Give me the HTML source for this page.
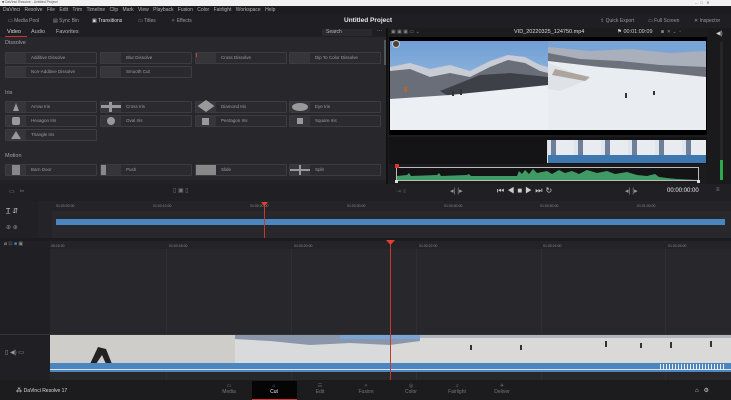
<!DOCTYPE html>
<html><head><meta charset="utf-8"><style>
*{margin:0;padding:0;box-sizing:border-box}
body{width:731px;height:400px;overflow:hidden;background:#28282c;font-family:"Liberation Sans",sans-serif;color:#b8b8bc;position:relative}
.a{position:absolute}
.t{font-size:5px;white-space:nowrap}
.item{position:absolute;width:92px;height:12px;background:#2b2b2f;border:1px solid #3c3c41;border-radius:1px}
.item .ic{position:absolute;left:0;top:0;width:20px;height:10px;background:#35353a}
.item .lb{position:absolute;left:25px;top:2px;font-size:4.5px;color:#9a9aa0}
.sec{position:absolute;left:5px;font-size:5.5px;color:#a0a0a6}
.rl{position:absolute;font-size:3.5px;color:#888;top:3px}
.tick{position:absolute;width:1px;background:#55555a}
</style></head><body>
<div class="a" style="left:0;top:0;width:731px;height:6px;background:#f2f2f2"></div>
<div class="a t" style="left:2px;top:0;font-size:3.5px;color:#555">■ DaVinci Resolve - Untitled Project</div>
<div class="a t" style="left:695px;top:0;font-size:4px;color:#555">–&nbsp;&nbsp;&nbsp;□&nbsp;&nbsp;&nbsp;✕</div>
<div class="a" style="left:0;top:6px;width:731px;height:8px;background:#1d1d20"></div>
<div class="a t" style="left:3px;top:7px;font-size:5px;color:#b0b0b4;word-spacing:3px">DaVinci&nbsp;Resolve File Edit Trim Timeline Clip Mark View Playback Fusion Color Fairlight Workspace Help</div>
<div class="a" style="left:0;top:14px;width:731px;height:14px;background:#1f1f23"></div>
<div class="a t" style="left:8px;top:18px;color:#999">▭ Media Pool</div>
<div class="a t" style="left:53px;top:18px;color:#999">▤ Sync Bin</div>
<div class="a t" style="left:92px;top:18px;color:#ddd">▣ Transitions</div>
<div class="a t" style="left:138px;top:18px;color:#999">▭ Titles</div>
<div class="a t" style="left:171px;top:18px;color:#999">✧ Effects</div>
<div class="a t" style="left:344px;top:17px;font-size:6.5px;color:#e8e8ea;font-weight:bold">Untitled Project</div>
<div class="a t" style="left:600px;top:18px;color:#999">⇪ Quick Export</div>
<div class="a t" style="left:648px;top:18px;color:#999">▭ Full Screen</div>
<div class="a t" style="left:694px;top:18px;color:#999">✕ Inspector</div>
<div class="a" style="left:0;top:28px;width:386px;height:9px;background:#1f1f23"></div>
<div class="a t" style="left:7px;top:29px;color:#ddd;font-size:5.5px">Video</div>
<div class="a" style="left:5px;top:36px;width:22px;height:1px;background:#c33"></div>
<div class="a t" style="left:31px;top:29px;font-size:5.5px">Audio</div>
<div class="a t" style="left:56px;top:29px;font-size:5.5px">Favorites</div>
<div class="a" style="left:322px;top:29px;width:50px;height:7px;background:#2a2a2e"></div>
<div class="a t" style="left:326px;top:29px;font-size:5px">Search</div>
<div class="a t" style="left:377px;top:28px;font-size:5px">···</div>
<div class="a" style="left:384px;top:40px;width:2px;height:25px;background:#55555a"></div>

<div class="sec" style="top:40px">Dissolve</div>
<div class="item" style="left:5px;top:52px"><div class="ic"></div><div class="lb">Additive Dissolve</div></div>
<div class="item" style="left:100px;top:52px"><div class="ic"></div><div class="lb">Blur Dissolve</div></div>
<div class="item" style="left:195px;top:52px"><div class="ic"></div><div class="a" style="left:0;top:0;width:1px;height:4px;background:#d33"></div><div class="lb">Cross Dissolve</div></div>
<div class="item" style="left:289px;top:52px"><div class="ic"></div><div class="lb">Dip To Color Dissolve</div></div>
<div class="item" style="left:5px;top:66px"><div class="ic"></div><div class="lb">Non-Additive Dissolve</div></div>
<div class="item" style="left:100px;top:66px"><div class="ic"></div><div class="lb">Smooth Cut</div></div>

<div class="sec" style="top:90px">Iris</div>
<div class="item" style="left:5px;top:101px"><div class="ic"><div class="a" style="left:7px;top:1px;width:0;height:0;border-left:3px solid transparent;border-right:3px solid transparent;border-bottom:8px solid #999"></div></div><div class="lb">Arrow Iris</div></div>
<div class="item" style="left:100px;top:101px"><div class="ic"><div class="a" style="left:0;top:3px;width:20px;height:3px;background:#999"></div><div class="a" style="left:8px;top:0;width:3px;height:10px;background:#999"></div></div><div class="lb">Cross Iris</div></div>
<div class="item" style="left:195px;top:101px"><div class="ic"><div class="a" style="left:4px;top:-2px;width:12px;height:12px;background:#999;transform:scaleY(.7) rotate(45deg)"></div></div><div class="lb">Diamond Iris</div></div>
<div class="item" style="left:289px;top:101px"><div class="ic"><div class="a" style="left:2px;top:1px;width:16px;height:8px;border-radius:50%;background:#999"></div></div><div class="lb">Eye Iris</div></div>
<div class="item" style="left:5px;top:115px"><div class="ic"><div class="a" style="left:6px;top:1px;width:8px;height:8px;border-radius:2px;background:#999"></div></div><div class="lb">Hexagon Iris</div></div>
<div class="item" style="left:100px;top:115px"><div class="ic"><div class="a" style="left:6px;top:1px;width:8px;height:8px;border-radius:50%;background:#999"></div></div><div class="lb">Oval Iris</div></div>
<div class="item" style="left:195px;top:115px"><div class="ic"><div class="a" style="left:6px;top:2px;width:7px;height:7px;background:#999"></div></div><div class="lb">Pentagon Iris</div></div>
<div class="item" style="left:289px;top:115px"><div class="ic"><div class="a" style="left:7px;top:2px;width:6px;height:6px;background:#999"></div></div><div class="lb">Square Iris</div></div>
<div class="item" style="left:5px;top:129px"><div class="ic"><div class="a" style="left:5px;top:1px;width:0;height:0;border-left:5px solid transparent;border-right:5px solid transparent;border-bottom:8px solid #999"></div></div><div class="lb">Triangle Iris</div></div>

<div class="sec" style="top:153px">Motion</div>
<div class="item" style="left:5px;top:164px"><div class="ic"><div class="a" style="left:6px;top:0;width:8px;height:10px;background:#888"></div></div><div class="lb">Barn Door</div></div>
<div class="item" style="left:100px;top:164px"><div class="ic"><div class="a" style="left:0;top:0;width:5px;height:10px;background:#888"></div></div><div class="lb">Push</div></div>
<div class="item" style="left:195px;top:164px"><div class="ic" style="background:#888"></div><div class="lb">Slide</div></div>
<div class="item" style="left:289px;top:164px"><div class="ic"><div class="a" style="left:0;top:4px;width:20px;height:2px;background:#999"></div><div class="a" style="left:9px;top:0;width:2px;height:10px;background:#999"></div></div><div class="lb">Split</div></div>
<div class="a" style="left:0;top:180px;width:386px;height:4px;background:#222226"></div>

<!-- viewer -->
<div class="a" style="left:386px;top:28px;width:345px;height:156px;background:#1c1c1f"></div>
<div class="a" style="left:386px;top:28px;width:2px;height:156px;background:#111"></div>
<div class="a t" style="left:391px;top:29px;color:#888">▣ ▣ ▣ ▭ ⌄</div>
<div class="a t" style="left:514px;top:29px;color:#ddd;font-size:5.5px">VID_20220325_124750.mp4</div>
<div class="a t" style="left:617px;top:29px;color:#ccc;font-size:5.5px">⚑ 00:01:09:09</div>
<div class="a t" style="left:661px;top:29px;color:#888">◙ &nbsp;✕ ⌄ &nbsp;▫</div>
<div class="a" style="left:389px;top:37px;width:318px;height:98px;background:#000"></div>
<svg class="a" style="left:390px;top:41px" width="316" height="89" viewBox="0 0 316 89">
<defs><linearGradient id="sk" x1="0" y1="0" x2="0" y2="1"><stop offset="0" stop-color="#6f9ed4"/><stop offset="1" stop-color="#b8d0ea"/></linearGradient></defs>
<rect width="158" height="89" fill="url(#sk)"/>
<path d="M0 26 L20 22 L40 28 L60 24 L80 30 L100 20 L118 14 L135 16 L150 24 L158 26 L158 60 L0 60Z" fill="#c8ccd4"/>
<path d="M0 30 L20 28 L40 36 L60 32 L80 36 L100 26 L118 19 L135 22 L150 30 L158 32 L158 50 L40 58 L0 60Z" fill="#6a6e78"/>
<path d="M50 50 L90 34 L120 32 L158 36 L158 48 L60 56Z" fill="#3e4048"/>
<path d="M0 58 L60 54 L158 44 L158 89 L0 89Z" fill="#eceff3"/>
<rect x="158" width="158" height="89" fill="#7aa4d6"/>
<path d="M158 6 L200 10 L240 8 L280 12 L316 10 L316 36 L158 36Z" fill="#a9b0bc"/>
<path d="M158 12 L190 18 L230 20 L270 24 L316 26 L316 40 L158 30Z" fill="#6c717c"/>
<path d="M158 20 L210 26 L260 30 L316 36 L316 89 L158 89Z" fill="#e9ecf0"/>
<path d="M158 22 L200 38 L170 50 L158 48Z" fill="#dfe2e6"/>
<path d="M165 28 L200 36 L195 40 L162 34Z" fill="#8a7c6e" opacity=".6"/>
<rect x="235" y="52" width="2" height="5" fill="#333"/><rect x="263" y="50" width="2" height="4" fill="#333"/>
<rect x="62" y="50" width="2" height="5" fill="#333"/><rect x="70" y="48" width="2" height="6" fill="#333"/><rect x="14" y="46" width="3" height="5" fill="#a63"/>
</svg>
<div class="a" style="left:392px;top:40px;width:8px;height:8px;border-radius:50%;border:1px solid #ccc;background:#444"></div>
<div class="a" style="left:389px;top:137px;width:318px;height:27px;background:#141417"></div>
<div class="a" style="left:547px;top:140px;width:159px;height:15px;background:repeating-linear-gradient(90deg,#dfe5ec 0 4px,#6f7f9a 4px 9px,#e8ecf0 9px 27px)"></div>
<div class="a" style="left:547px;top:155px;width:159px;height:8px;background:#3e78b0"></div>
<div class="a" style="left:547px;top:140px;width:1px;height:23px;background:#ddd"></div>
<div class="a" style="left:396px;top:167px;width:303px;height:14px;border:1px solid #bbb;background:#141417"></div>
<svg class="a" style="left:397px;top:168px" width="301" height="12" viewBox="0 0 301 12">
<path d="M0 12 L0 8 L10 7 L12 5 L14 8 L40 7 L42 5 L44 8 L70 7 L72 6 L74 8 L120 8 L122 3 L125 6 L128 2 L132 6 L136 1 L140 5 L150 3 L155 6 L162 2 L168 5 L175 3 L182 6 L190 2 L200 5 L210 3 L218 6 L230 4 L240 7 L250 8 L258 6 L262 9 L270 10 L280 11 L301 12Z" fill="#3f9a64"/>
</svg>
<div class="a" style="left:395px;top:164px;width:4px;height:4px;background:#d33"></div>
<div class="a" style="left:395px;top:180px;width:3px;height:3px;background:#ddd"></div>
<div class="a" style="left:697px;top:180px;width:3px;height:3px;background:#ddd"></div>
<div class="a" style="left:707px;top:28px;width:24px;height:156px;background:#1a1a1d"></div>
<div class="a t" style="left:716px;top:30px;color:#ccc;font-size:6px">◀)</div>
<div class="a" style="left:720px;top:42px;width:3px;height:118px;background:#26262a"></div>
<div class="a" style="left:720px;top:160px;width:3px;height:20px;background:#2ea84a"></div>

<div class="a" style="left:0;top:184px;width:731px;height:17px;background:#202024"></div>
<div class="a t" style="left:9px;top:188px;color:#777;font-size:6px">▭&nbsp;&nbsp;&nbsp;✂</div>
<div class="a t" style="left:173px;top:187px;color:#777;font-size:6px">▯ ▣ ▯</div>
<div class="a t" style="left:396px;top:188px;color:#555;font-size:6px">⇥ ≡</div>
<div class="a t" style="left:450px;top:187px;color:#999;font-size:7px">◂| |▸</div>
<div class="a t" style="left:497px;top:186px;color:#ccc;font-size:8px;letter-spacing:3px">⏮◀■▶⏭↻</div>
<div class="a t" style="left:625px;top:187px;color:#999;font-size:7px">◂| |▸</div>
<div class="a t" style="left:667px;top:188px;color:#eee;font-size:6px">00:00:00:00</div>
<div class="a t" style="left:716px;top:187px;color:#888;font-size:6px">≡</div>

<div class="a" style="left:0;top:201px;width:731px;height:37px;background:#28282c"></div>
<div class="a" style="left:0;top:201px;width:38px;height:37px;background:#212125"></div>
<div class="a" style="left:38px;top:201px;width:14px;height:37px;background:#242428"></div>
<div class="a t" style="left:6px;top:207px;color:#ccc;font-size:7px">T̲ ⇵</div>
<div class="a t" style="left:6px;top:224px;color:#888;font-size:6px">⊕ ⊕</div>
<div class="a" style="left:52px;top:201px;width:679px;height:10px;background:#242428"></div>
<div class="rl" style="left:56px;top:204px">01:00:00:00</div>
<div class="rl" style="left:153px;top:204px">01:00:10:00</div>
<div class="rl" style="left:250px;top:204px">01:00:20:00</div>
<div class="rl" style="left:347px;top:204px">01:00:30:00</div>
<div class="rl" style="left:444px;top:204px">01:00:40:00</div>
<div class="rl" style="left:540px;top:204px">01:00:50:00</div>
<div class="rl" style="left:637px;top:204px">01:01:00:00</div>
<div class="a" style="left:56px;top:219px;width:669px;height:6px;background:#4a86c0"></div>
<div class="a" style="left:264px;top:203px;width:1px;height:35px;background:#c03a30"></div>
<div class="a" style="left:261px;top:202px;width:7px;height:4px;background:#e04030;clip-path:polygon(0 0,100% 0,50% 100%)"></div>

<div class="a" style="left:0;top:238px;width:731px;height:3px;background:#1c1c20"></div>
<div class="a" style="left:0;top:241px;width:50px;height:139px;background:#202024"></div>
<div class="a" style="left:50px;top:241px;width:681px;height:8px;background:#242428"></div>
<div class="a t" style="left:4px;top:241px;color:#bbb;font-size:5px">⌀ <span style="color:#777">⊡</span> <span style="color:#3a8ae0">■</span> <span style="color:#888">▣</span></div>
<div class="rl" style="left:51px;top:244px">00:16:00</div>
<div class="rl" style="left:169px;top:244px">01:00:18:00</div>
<div class="rl" style="left:294px;top:244px">01:00:20:00</div>
<div class="rl" style="left:419px;top:244px">01:00:22:00</div>
<div class="rl" style="left:543px;top:244px">01:00:24:00</div>
<div class="rl" style="left:668px;top:244px">01:00:26:00</div>
<div class="tick" style="left:166px;top:249px;height:131px;background:#2e2e33"></div>
<div class="tick" style="left:291px;top:249px;height:131px;background:#2e2e33"></div>
<div class="tick" style="left:416px;top:249px;height:131px;background:#2e2e33"></div>
<div class="tick" style="left:541px;top:249px;height:131px;background:#2e2e33"></div>
<div class="tick" style="left:665px;top:249px;height:131px;background:#2e2e33"></div>
<div class="a" style="left:0;top:334px;width:731px;height:1px;background:#333"></div>
<div class="a t" style="left:5px;top:349px;color:#999;font-size:6px">▯ ◀) ▭</div>
<svg class="a" style="left:50px;top:335px" width="681" height="29" viewBox="0 0 681 29">
<rect width="681" height="29" fill="#d9d9d8"/>
<rect width="185" height="29" fill="#cfcdca"/>
<rect x="185" width="155" height="29" fill="#d8dadc"/>
<path d="M185 0 L370 0 L370 6 L340 10 L300 8 L260 10 L220 6 L185 4Z" fill="#8a96aa"/>
<rect x="290" y="0" width="80" height="4" fill="#7aa4d6"/>
<path d="M370 0 L681 0 L681 3 L370 3Z" fill="#b0b4bc"/>
<path d="M40 29 L48 12 L56 14 L62 29 L56 29 L52 20 L46 29Z" fill="#222"/>
<rect x="555" y="6" width="2" height="6" fill="#333"/><rect x="590" y="8" width="2" height="5" fill="#333"/><rect x="620" y="7" width="2" height="6" fill="#333"/><rect x="660" y="6" width="2" height="6" fill="#333"/><rect x="470" y="10" width="2" height="5" fill="#333"/><rect x="420" y="10" width="2" height="5" fill="#333"/>
</svg>
<div class="a" style="left:50px;top:363px;width:681px;height:9px;background:#4a86c0"></div>
<div class="a" style="left:50px;top:369px;width:681px;height:1px;background:#dde"></div>
<div class="a" style="left:660px;top:364px;width:66px;height:6px;background:repeating-linear-gradient(90deg,#eee 0 1px,transparent 1px 3px)"></div>
<div class="a" style="left:390px;top:242px;width:1px;height:140px;background:#c03a30"></div>
<div class="a" style="left:386px;top:240px;width:9px;height:5px;background:#e04030;clip-path:polygon(0 0,100% 0,50% 100%)"></div>

<div class="a" style="left:0;top:380px;width:731px;height:20px;background:#1c1c1f"></div>
<div class="a t" style="left:16px;top:387px;color:#ddd;font-size:6px">⁂ <span style="font-size:5px">DaVinci Resolve 17</span></div>
<div class="a" style="left:252px;top:381px;width:45px;height:19px;background:#050506"></div>
<div class="a" style="left:252px;top:399px;width:45px;height:1px;background:#d33"></div>
<div class="a t" style="left:221px;top:383px;color:#777;font-size:5px;text-align:center;width:16px">▭<br>Media</div>
<div class="a t" style="left:266px;top:383px;color:#5a8ad0;font-size:5px;text-align:center;width:16px">⌂<br><span style="color:#eee">Cut</span></div>
<div class="a t" style="left:312px;top:383px;color:#777;font-size:5px;text-align:center;width:16px">☷<br>Edit</div>
<div class="a t" style="left:356px;top:383px;color:#777;font-size:5px;text-align:center;width:20px">✧<br>Fusion</div>
<div class="a t" style="left:402px;top:383px;color:#777;font-size:5px;text-align:center;width:18px">◎<br>Color</div>
<div class="a t" style="left:445px;top:383px;color:#777;font-size:5px;text-align:center;width:24px">♫<br>Fairlight</div>
<div class="a t" style="left:492px;top:383px;color:#777;font-size:5px;text-align:center;width:20px">✈<br>Deliver</div>
<div class="a t" style="left:695px;top:387px;color:#ccc;font-size:6px">⌂&nbsp;&nbsp;&nbsp;⚙</div>
</body></html>
